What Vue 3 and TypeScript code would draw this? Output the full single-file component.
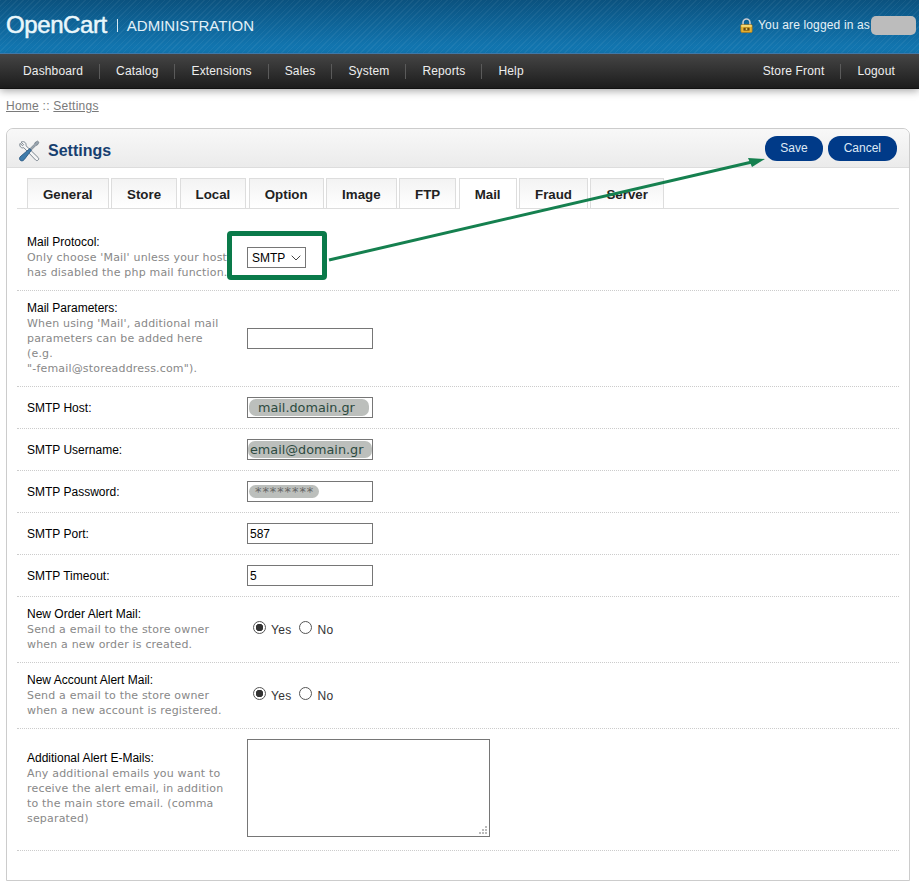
<script setup lang="ts">
type Row = { label: string, help?: string, kind: string, value?: string, yes?: boolean }

const tabs = ['General', 'Store', 'Local', 'Option', 'Image', 'FTP', 'Mail', 'Fraud', 'Server'];
const menuLeft = ['Dashboard', 'Catalog', 'Extensions', 'Sales', 'System', 'Reports', 'Help'];
const menuRight = ['Store Front', 'Logout'];

const rows: Row[] = [
    { label: 'Mail Protocol:', help: "Only choose 'Mail' unless your host has disabled the php mail function.", kind: 'select' },
    { label: 'Mail Parameters:', help: "When using 'Mail', additional mail parameters can be added here (e.g.\n\"-femail@storeaddress.com\").", kind: 'text', value: '' },
    { label: 'SMTP Host:', kind: 'host' },
    { label: 'SMTP Username:', kind: 'user' },
    { label: 'SMTP Password:', kind: 'pass' },
    { label: 'SMTP Port:', kind: 'text', value: '587' },
    { label: 'SMTP Timeout:', kind: 'text', value: '5' },
    { label: 'New Order Alert Mail:', help: 'Send a email to the store owner when a new order is created.', kind: 'radio' },
    { label: 'New Account Alert Mail:', help: 'Send a email to the store owner when a new account is registered.', kind: 'radio' },
    { label: 'Additional Alert E-Mails:', help: 'Any additional emails you want to receive the alert email, in addition to the main store email. (comma separated)', kind: 'area' },
];
</script>
<template>
    <div class="page">
        <header class="top">
            <div class="logo">OpenCart</div>
            <div class="logo-sep"></div>
            <div class="logo-sub">ADMINISTRATION</div>
            <div class="logged">
                <svg width="13" height="15" viewBox="0 0 15 17">
                    <path d="M3.5 8V5a4 4 0 0 1 8 0v3" fill="none" stroke="#c9ccd2" stroke-width="1.8" />
                    <rect x="1" y="7.5" width="13" height="9" rx="1" fill="#e8b22e" stroke="#a8761a" stroke-width=".8" />
                    <rect x="1.5" y="8" width="12" height="2" fill="#f8dc7a" />
                    <rect x="4" y="11" width="7" height="3.4" fill="#6b4a10" />
                    <rect x="6.6" y="11.6" width="1.8" height="2" fill="#f3d568" />
                </svg>
                <span class="logged-text">You are logged in as</span>
                <span class="user-mask"></span>
            </div>
        </header>

        <nav class="menu">
            <ul class="menu-list">
                <li v-for="m in menuLeft" :key="m">{{ m }}</li>
            </ul>
            <ul class="menu-list">
                <li v-for="m in menuRight" :key="m">{{ m }}</li>
            </ul>
        </nav>

        <div class="breadcrumb"><a>Home</a> :: <a>Settings</a></div>

        <section class="box">
            <div class="heading">
                <h1>
                    <svg width="22" height="22" viewBox="0 0 22 22">
                        <path d="M3 2.2 5.6 4.6 4.6 5.7 2 3.4C1.3 5.2 2 7 3.6 7.7c.8.3 1.5.3 2.2 0L17.6 20c.8.8 2 .8 2.6 0 .7-.7.6-1.8-.1-2.5L8 5.7c.3-1.7-.3-3.2-1.8-3.8C5.2 1.5 4 1.6 3 2.2Z" fill="#f4f5f6" stroke="#6f7a84" stroke-width=".9" />
                        <path d="M19.6 1 21 2.4 19.4 5 18 5.4 12.6 10.8 11.2 9.4 16.6 4 17 2.6Z" fill="#9aa6b0" stroke="#5f6b75" stroke-width=".6" />
                        <path d="M11.8 8.6 13.4 10.2 6.4 19.4C5.2 21 3.4 21.4 2.2 20.2 1 19 1.4 17.2 3 16Z" fill="#3f7cab" stroke="#24527c" stroke-width=".8" />
                    </svg>
                    Settings
                </h1>
                <div class="buttons">
                    <a class="button">Save</a>
                    <a class="button">Cancel</a>
                </div>
            </div>

            <div class="content">
                <div class="tabs">
                    <a v-for="t in tabs" :key="t" class="tab" :class="{ active: t === 'Mail' }">{{ t }}</a>
                </div>

                <div class="form">
                    <div v-for="r in rows" :key="r.label" class="row" :class="{ 'row-area': r.kind === 'area' }">
                        <div class="label" :class="{ plain: !r.help }">
                            {{ r.label }}
                            <span v-if="r.help" class="help">{{ r.help }}</span>
                        </div>
                        <div class="field">
                            <div v-if="r.kind === 'select'" class="select">
                                SMTP
                                <svg width="10" height="6" viewBox="0 0 10 6">
                                    <path d="M.7.7 5 5 9.3.7" fill="none" stroke="#444" />
                                </svg>
                            </div>
                            <input v-else-if="r.kind === 'text'" class="input" type="text" :value="r.value" />
                            <div v-else-if="r.kind === 'host'" class="input masked">
                                <span class="mask mask-host">mail.domain.gr</span>
                            </div>
                            <div v-else-if="r.kind === 'user'" class="input masked">
                                <span class="mask mask-user">email@domain.gr</span>
                            </div>
                            <div v-else-if="r.kind === 'pass'" class="input masked">
                                <span class="mask mask-pass">********</span>
                            </div>
                            <div v-else-if="r.kind === 'radio'" class="radios">
                                <label><input type="radio" :name="r.label" checked /> Yes</label>
                                <label><input type="radio" :name="r.label" /> No</label>
                            </div>
                            <div v-else class="area-wrap">
                                <textarea class="area"></textarea>
                                <svg class="grip" width="8" height="8" viewBox="0 0 8 8" fill="#bbb">
                                    <rect x="6" y="0" width="2" height="2" />
                                    <rect x="3" y="3" width="2" height="2" />
                                    <rect x="6" y="3" width="2" height="2" />
                                    <rect x="0" y="6" width="2" height="2" />
                                    <rect x="3" y="6" width="2" height="2" />
                                    <rect x="6" y="6" width="2" height="2" />
                                </svg>
                            </div>
                        </div>
                    </div>
                </div>
            </div>
        </section>

        <svg class="annotation" width="919" height="885" viewBox="0 0 919 885">
            <rect x="229.5" y="233.5" width="95" height="44" rx="1.5" fill="none" stroke="#0a7a4a" stroke-width="5" />
            <line x1="329" y1="260" x2="752" y2="162" stroke="#15804f" stroke-width="3" />
            <polygon points="765,159 748,158 752,167" fill="#15804f" />
        </svg>
    </div>
</template>
<style>
html,
body {
    margin: 0;
    background: #fff;
}
</style>
<style scoped>
.page {
    position: relative;
    height: 885px;
    overflow: hidden;
    font-family: "Liberation Sans", Arial, sans-serif;
    font-size: 12px;
    color: #000;
}

.top {
    display: flex;
    align-items: center;
    height: 53px;
    padding: 0 3px 3px 6px;
    box-sizing: border-box;
    color: #fff;
    background:
        repeating-linear-gradient(135deg, rgba(255, 255, 255, .05) 0 1px, rgba(255, 255, 255, 0) 1px 4px),
        linear-gradient(#0b527f, #137ab6);
}

.logo {
    font-size: 24px;
    letter-spacing: -.4px;
    color: #eaf7fb;
    -webkit-text-stroke: .5px #eaf7fb;
}

.logo-sep {
    width: 1px;
    height: 13px;
    margin: 0 9px 0 10px;
    background: #d5e8f2;
}

.logo-sub {
    font-size: 15px;
    color: #e3f1f8;
}

.logged {
    display: flex;
    align-items: center;
    margin-left: auto;
    color: #e6f1f7;
}

.logged-text {
    margin-left: 5px;
    letter-spacing: .15px;
}

.user-mask {
    width: 45px;
    height: 19px;
    margin-left: 1px;
    border-radius: 5px;
    background: #bcbcbc;
}

.menu {
    display: flex;
    justify-content: space-between;
    height: 34px;
    padding: 0 8px 0 7px;
    border-top: 1px solid #3f78a8;
    background: linear-gradient(#454545, #1c1c1c);
    box-shadow: 0 1px 0 #111, 0 3px 8px rgba(0, 0, 0, .35);
}

.menu-list {
    display: flex;
    align-items: center;
    margin: 0;
    padding: 1px 0 0;
    list-style: none;
}

.menu-list li {
    padding: 0 16px;
    line-height: 15px;
    color: #eee;
    letter-spacing: .15px;
    border-left: 1px solid #5a5a5a;
}

.menu-list li:first-child {
    border-left: 0;
}

.breadcrumb {
    margin-top: 10px;
    padding-left: 6px;
    line-height: 16px;
    letter-spacing: .25px;
    color: #7a7a7a;
}

.breadcrumb a {
    text-decoration: underline;
}

.box {
    margin: 14px 9px 0 6px;
    height: 753px;
    box-sizing: border-box;
    border: 1px solid #ccc;
    border-radius: 7px 7px 0 0;
}

.heading {
    display: flex;
    justify-content: space-between;
    align-items: center;
    height: 38px;
    padding: 0 12px 0 11px;
    border-bottom: 1px solid #ddd;
    border-radius: 7px 7px 0 0;
    background: linear-gradient(#f8f8f8, #ebebeb);
}

h1 {
    display: flex;
    align-items: center;
    gap: 8px;
    margin: 6px 0 0;
    font-size: 16px;
    color: #173f70;
}

.buttons {
    display: flex;
    gap: 5px;
}

.button {
    padding: 0 15px;
    line-height: 25px;
    border-radius: 12px;
    color: #dfe9f5;
    background: #003a88;
}

.button:last-child {
    padding: 0 16px;
}

.content {
    padding: 10px;
}

.tabs {
    display: flex;
    gap: 2.5px;
    padding-left: 10px;
    border-bottom: 1px solid #ddd;
}

.tab {
    height: 29px;
    padding: 0 15px;
    line-height: 31px;
    font-size: 13.3px;
    font-weight: bold;
    color: #222;
    border: 1px solid #ddd;
    border-bottom: 0;
    background: linear-gradient(#f3f3f3, #fff);
}

.tab.active {
    position: relative;
    height: 30px;
    margin-bottom: -1px;
    background: #fff;
}

.form {
    margin-top: 16px;
}

.row {
    display: grid;
    grid-template-columns: 220px 1fr;
    align-items: center;
    padding: 10px;
    border-bottom: 1px dotted #ccc;
}

.row-area {
    padding-bottom: 13px;
}

.label {
    width: 202px;
    line-height: 15px;
}

.label.plain {
    padding-top: 2px;
}

.help {
    display: block;
    font-family: "DejaVu Sans", Verdana, sans-serif;
    font-size: 11px;
    letter-spacing: .18px;
    color: #888;
    white-space: pre-line;
}

.input {
    display: block;
    box-sizing: border-box;
    width: 126px;
    height: 21px;
    margin: 0;
    padding: 1px 2px;
    font-family: "Liberation Sans", Arial, sans-serif;
    font-size: 12px;
    background: #fff;
    border: 1px solid #767676;
    outline: 0;
}

.masked {
    position: relative;
    padding: 0;
}

.mask {
    position: absolute;
    top: 1px;
    left: 1px;
    height: 17px;
    box-sizing: border-box;
    line-height: 17px;
    border-radius: 7px;
    font-family: "DejaVu Sans", Verdana, sans-serif;
    font-size: 12.8px;
    color: #2c4a40;
    background: #bcbfbc;
    white-space: nowrap;
}

.mask-host {
    width: 120px;
    padding-left: 9px;
}

.mask-user {
    left: 0;
    width: 124px;
    padding-left: 2px;
}

.mask-pass {
    top: 3px;
    width: 70px;
    height: 13px;
    padding-left: 6px;
    line-height: 14px;
    letter-spacing: 1px;
    color: #666;
}

.select {
    display: flex;
    align-items: center;
    justify-content: space-between;
    box-sizing: border-box;
    width: 59px;
    height: 21px;
    padding: 0 4px;
    border: 1px solid #767676;
}

.radios {
    display: flex;
    gap: 8px;
    padding-left: 6px;
}

.radios label {
    display: flex;
    align-items: center;
    gap: 5px;
    letter-spacing: .3px;
    color: #333;
}

.radios input {
    appearance: none;
    width: 13px;
    height: 13px;
    margin: 0 0 4px;
    border: 1px solid #555;
    border-radius: 50%;
    background: #fff;
}

.radios input:checked {
    background: radial-gradient(circle, #333 0 3.5px, #fff 4px);
}

.area-wrap {
    position: relative;
    width: 243px;
    height: 98px;
}

.area {
    display: block;
    box-sizing: border-box;
    width: 243px;
    height: 98px;
    margin: 0;
    border: 1px solid #767676;
    outline: 0;
    resize: none;
}

.grip {
    position: absolute;
    right: 3px;
    bottom: 3px;
}

.annotation {
    position: absolute;
    top: 0;
    left: 0;
    pointer-events: none;
}
</style>
